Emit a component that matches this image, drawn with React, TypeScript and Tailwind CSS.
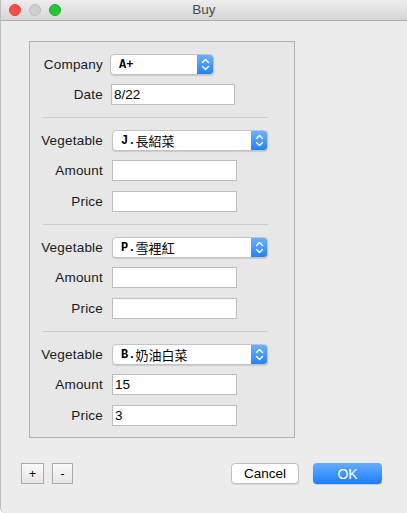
import React from "react";

const font = { fontFamily: '"Liberation Sans", Arial, sans-serif' };

function Popup({ value, width }: { value: React.ReactNode; width: string }) {
  return (
    <div
      className={`${width} h-[21px] flex items-stretch rounded-[4px] border border-[#c3c3c3] bg-white shadow-[0_1px_1px_rgba(0,0,0,0.12)] overflow-hidden`}
    >
      <div className="flex-1 flex items-center pl-[8px] text-[13px] text-black leading-none">{value}</div>
      <div className="w-[17px] -my-px -mr-px rounded-r-[4px] bg-gradient-to-b from-[#6cb4fc] to-[#1c7ffb] flex items-center justify-center">
        <svg width="17" height="21" viewBox="0 0 17 21" fill="none">
          <path d="M5.5 8.5 L8.5 5.5 L11.5 8.5" stroke="white" strokeWidth="1.4" strokeLinecap="round" strokeLinejoin="round" />
          <path d="M5.5 12.5 L8.5 15.5 L11.5 12.5" stroke="white" strokeWidth="1.4" strokeLinecap="round" strokeLinejoin="round" />
        </svg>
      </div>
    </div>
  );
}

function Field({ value = "", width }: { value?: string; width: string }) {
  return (
    <div className={`${width} h-[21px] border border-[#bdbdbd] bg-white flex items-center pl-[2px] pt-px text-[13.5px] text-black`}>
      {value}
    </div>
  );
}

function Row({ label, children, gap, className = "" }: { label: string; children: React.ReactNode; gap: string; className?: string }) {
  return (
    <div className={`flex items-center h-[21px] ${className}`}>
      <div className="w-[72px] pt-[2px] text-right text-[13.5px] tracking-[0.2px] text-[#1a1a1a]">{label}</div>
      <div className={gap}>{children}</div>
    </div>
  );
}

function VegName({ code, name }: { code: string; name: string }) {
  return (
    <span className="flex items-center">
      <span className="font-bold text-[12px]" style={{ fontFamily: '"Liberation Mono", "Courier New", monospace' }}>
        {code}
      </span>
      <span className="text-[13px]" style={{ fontFamily: '"Noto Sans CJK TC", "Noto Sans CJK SC", sans-serif' }}>
        {name}
      </span>
    </span>
  );
}

const vegetables = [
  { code: "J.", name: "長紹菜", amount: "", price: "" },
  { code: "P.", name: "雪裡紅", amount: "", price: "" },
  { code: "B.", name: "奶油白菜", amount: "15", price: "3" },
];

export default function App() {
  return (
    <div
      className="w-[407px] h-[513px] bg-[#ececec] flex flex-col border-l border-[#bdbdbd] rounded-bl-[5px] overflow-hidden"
      style={font}
    >
      {/* title bar */}
      <div className="h-[21px] shrink-0 bg-gradient-to-b from-[#ededed] to-[#d6d6d6] border-b border-[#aeaeae] flex items-center relative">
        <div className="flex items-center gap-[8px] pl-[8px]">
          <span className="w-[12px] h-[12px] rounded-full bg-[#fc4f4c] border border-[#e0403d]" />
          <span className="w-[12px] h-[12px] rounded-full bg-[#cfcfcf] border border-[#bdbdbd]" />
          <span className="w-[12px] h-[12px] rounded-full bg-[#28c43a] border border-[#1eaa2d]" />
        </div>
        <div className="absolute inset-0 flex items-center justify-center text-[13.5px] text-[#4a4a4a]">Buy</div>
      </div>

      {/* group box */}
      <div className="ml-[28px] mt-[20px] w-[266px] h-[397px] border border-[#b1b1b1] bg-[#e7e7e7] pt-[12px] pl-px">
        <Row label="Company" gap="ml-[7px]">
          <Popup
            width="w-[104px]"
            value={
              <span className="font-bold text-[12px]" style={{ fontFamily: '"Liberation Mono", "Courier New", monospace' }}>
                A+
              </span>
            }
          />
        </Row>
        <Row label="Date" gap="ml-[8px]" className="mt-[9px]">
          <Field width="w-[124px]" value="8/22" />
        </Row>

        {vegetables.map((v, i) => (
          <div key={i}>
            <div className="mt-[12px] ml-[12px] w-[225px] border-t border-[#cbcbcb]" />
            <Row label="Vegetable" gap="ml-[9px]" className="mt-[12px]">
              <Popup width="w-[156px]" value={<VegName code={v.code} name={v.name} />} />
            </Row>
            <Row label="Amount" gap="ml-[9px]" className="mt-[9px]">
              <Field width="w-[125px]" value={v.amount} />
            </Row>
            <Row label="Price" gap="ml-[9px]" className="mt-[10px]">
              <Field width="w-[125px]" value={v.price} />
            </Row>
          </div>
        ))}
      </div>

      {/* bottom buttons */}
      <div className="flex items-center mt-[25px] pl-[20px] pr-[25px]">
        <button className="w-[23px] h-[21px] border border-[#a9a9a9] bg-gradient-to-b from-[#fafafa] to-[#e6e6e6] text-[12px] text-black leading-none flex items-center justify-center">
          +
        </button>
        <button className="ml-[8px] w-[21px] h-[21px] border border-[#a9a9a9] bg-gradient-to-b from-[#fafafa] to-[#e6e6e6] text-[12px] text-black leading-none flex items-center justify-center">
          -
        </button>
        <div className="flex-1" />
        <button className="w-[68px] h-[21px] rounded-[4px] border border-[#c0c0c0] bg-white pt-px text-[13.5px] text-black shadow-[0_1px_1px_rgba(0,0,0,0.1)] flex items-center justify-center">
          Cancel
        </button>
        <button className="ml-[14px] w-[69px] h-[21px] rounded-[4px] bg-gradient-to-b from-[#62acfc] to-[#1a7dfb] pt-px text-[14px] text-white flex items-center justify-center shadow-[0_1px_1px_rgba(0,0,0,0.15)]">
          OK
        </button>
      </div>
    </div>
  );
}
